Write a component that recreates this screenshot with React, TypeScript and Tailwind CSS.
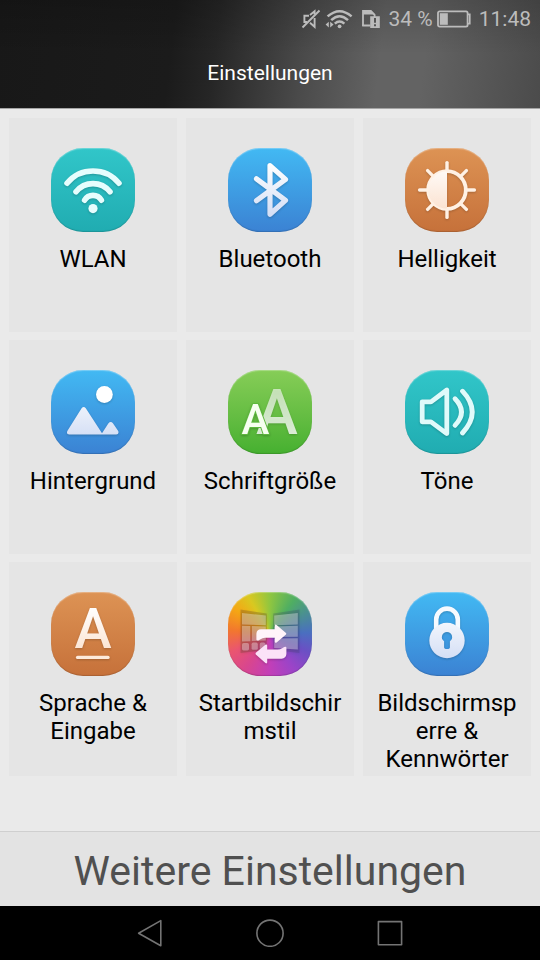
import type { ReactNode } from 'react'

type TileColor = 'teal' | 'blue' | 'orange' | 'green' | 'rainbow'

const TILE_BG: Record<TileColor, string> = {
  teal:    'bg-linear-to-b from-[#31c6c9] to-[#20acb1]',
  blue:    'bg-linear-to-b from-[#42b9f3] to-[#3b82d3]',
  orange:  'bg-linear-to-b from-[#dd9354] to-[#c6713a]',
  green:   'bg-linear-to-b from-[#86cd57] to-[#45b030]',
  rainbow: 'bg-[conic-gradient(from_0deg_at_50%_50%,#8fc640_0deg,#4fae62_35deg,#4a8f92_60deg,#4a6fc0_88deg,#6a50c4_115deg,#9a44c8_145deg,#c23fb8_180deg,#d8468f_215deg,#ea5570_245deg,#f2762f_275deg,#f5a614_305deg,#d9c820_330deg,#8fc640_360deg)]',
}

function Glyph({ children }: { children: ReactNode }) {
  return (
    <svg
      viewBox="0 0 84 84"
      aria-hidden="true"
      className="block size-full drop-shadow-[0_1px_1px_rgba(0,0,0,0.2)]"
      fill="none"
      strokeLinecap="round"
      strokeLinejoin="round"
    >
      <defs>
        <linearGradient id="snow" gradientUnits="userSpaceOnUse" x1="0" y1="16" x2="0" y2="68">
          <stop offset="0" stopColor="#ffffff" />
          <stop offset="1" stopColor="#d3def5" />
        </linearGradient>
        <linearGradient id="cream" gradientUnits="userSpaceOnUse" x1="0" y1="14" x2="0" y2="66">
          <stop offset="0" stopColor="#ffffff" />
          <stop offset="1" stopColor="#fbe0cc" />
        </linearGradient>
        <linearGradient id="leaf" gradientUnits="userSpaceOnUse" x1="0" y1="18" x2="0" y2="64">
          <stop offset="0" stopColor="#ffffff" stopOpacity="0.6" />
          <stop offset="1" stopColor="#ffffff" stopOpacity="0.8" />
        </linearGradient>
      </defs>
      {children}
    </svg>
  )
}

function WifiGlyph() {
  return (
    <Glyph>
      <g stroke="#e6fdfd" strokeWidth="5.6">
        <path d="M16 35.2A33.7 33.7 0 0 1 68 35.2" />
        <path d="M25 43.8A21.7 21.7 0 0 1 59 43.8" />
        <path d="M33.6 52.2A9.7 9.7 0 0 1 50.4 52.2" />
      </g>
      <circle cx="42" cy="60.6" r="4.6" fill="#e6fdfd" />
    </Glyph>
  )
}

function BluetoothGlyph() {
  return (
    <Glyph>
      <path d="M28.5 30.8 57.5 52.4 42 66.2V17.6L57.5 31.4 28.5 52.7" stroke="url(#snow)" strokeWidth="5.2" />
    </Glyph>
  )
}

const RAYS = [0, 45, 90, 135, 180, 225, 270, 315]

function BrightnessGlyph() {
  return (
    <Glyph>
      <circle cx="42" cy="42" r="18.8" stroke="#fff1e4" strokeWidth="3.8" />
      <path d="M42 23.2a18.8 18.8 0 0 0 0 37.6z" fill="url(#cream)" />
      {RAYS.map(a => (
        <path key={a} d="M42 22V14.6" stroke="#fff1e4" strokeWidth="3.4" transform={`rotate(${a} 42 42)`} />
      ))}
    </Glyph>
  )
}

function WallpaperGlyph() {
  return (
    <Glyph>
      <circle cx="53.4" cy="24.5" r="8.4" fill="#ffffff" />
      <path
        d="M30.6 38.2q2.1-2.6 4.2 0L51 63.2 57.3 53.4q2.4-2.6 4.8 0L67.2 61q1.2 3.3-2 3.5H18.2q-3.4-.4-1.7-3.7z"
        fill="url(#snow)"
      />
    </Glyph>
  )
}

function FontSizeGlyph() {
  return (
    <Glyph>
      <text x="49" y="63.5" textAnchor="middle" fontSize="63" fontWeight="500" fill="url(#leaf)">A</text>
      <text x="27.5" y="63.5" textAnchor="middle" fontSize="42" fontWeight="500" fill="#f6fff0" stroke="#5db83d" strokeWidth="2" paintOrder="stroke">A</text>
    </Glyph>
  )
}

function SoundGlyph() {
  return (
    <Glyph>
      <g stroke="#e0fafa" strokeWidth="4.8">
        <path d="M17.2 31.8H26L41.8 20V63.6L26 51.8H17.2z" />
        <path d="M50 28.8Q63 42 50 55.4" />
        <path d="M57.5 21.2Q77 42 57.5 63" />
      </g>
    </Glyph>
  )
}

function LanguageGlyph() {
  return (
    <Glyph>
      <text x="42" y="55.5" textAnchor="middle" fontSize="56" fontWeight="500" fill="url(#cream)">A</text>
      <path d="M26.6 65.4H57" stroke="#fdeadb" strokeWidth="3.4" />
    </Glyph>
  )
}

function HomeStyleGlyph() {
  return (
    <Glyph>
      <path d="M12.5 17.6 38.8 21.4V58L12.5 61z" fill="#5a3c28" fillOpacity="0.28" />
      <path d="M45.2 21.4 71.5 17.6V61L45.2 58z" fill="#3c3c64" fillOpacity="0.25" />
      <g fill="#ffffff" fillOpacity="0.34">
        <path d="M14 21 37.8 23.6V33.2L14 32.4z" />
        <path d="M14 33.8 22.3 34V49.2L14 49.6z" />
        <path d="M23.8 34 37.8 34.4V48.6L23.8 49z" />
        <rect x="14" y="51" width="7" height="7.4" rx="1.6" />
        <rect x="23.6" y="50.6" width="6.2" height="7.2" rx="1.6" />
        <rect x="31.8" y="50.4" width="5.6" height="6.8" rx="1.6" />
        <path d="M46.2 23.6 69.8 21V32.4L46.2 33.2z" />
        <path d="M46.2 34.6 69.8 33.8V44.8L46.2 45z" />
        <path d="M46.2 46.4 69.8 46.2V57.4L46.2 56z" />
      </g>
      <path d="M29.4 48.6q-1-.2-1-1V41.8Q28.6 37.4 33 37.3H46.8V33.4q.4-1.4 1.8-.4L58 41q.6.8 0 1.6L48.6 50.4q-1.6.8-1.8-.6V45.8H37Q34.6 45.8 32 47.4 30.4 48.6 29.4 48.6z" fill="#fff4fa" />
      <path d="M57.4 54.8q1 .2 1 1V62Q58 66.4 53.6 66.7H39.2V70.6q-.4 1.4-1.8.4L27.8 62.4q-.6-.8 0-1.6L37.4 52.8q1.6-.8 1.8.6V57.6H49.6Q52 57.6 54.6 56 56.4 54.8 57.4 54.8z" fill="#fbe2f8" />
    </Glyph>
  )
}

function LockGlyph() {
  return (
    <Glyph>
      <path d="M31.2 40V27.4a10.8 10.8 0 0 1 21.6 0V40" stroke="#f6faff" strokeWidth="4.6" />
      <path
        fillRule="evenodd"
        d="M42 30.8a17.7 17.7 0 1 1 0 35.4 17.7 17.7 0 0 1 0-35.4zM42 40a5.1 5.1 0 0 0-2.9 9.3V55.6q.2 1.4 1.6 1.4h2.6q1.4 0 1.6-1.4V49.3A5.1 5.1 0 0 0 42 40z"
        fill="url(#snow)"
      />
    </Glyph>
  )
}

const TILES: { label: string; color: TileColor; glyph: ReactNode }[] = [
  { label: 'WLAN',                      color: 'teal',    glyph: <WifiGlyph /> },
  { label: 'Bluetooth',                 color: 'blue',    glyph: <BluetoothGlyph /> },
  { label: 'Helligkeit',                color: 'orange',  glyph: <BrightnessGlyph /> },
  { label: 'Hintergrund',               color: 'blue',    glyph: <WallpaperGlyph /> },
  { label: 'Schriftgröße',              color: 'green',   glyph: <FontSizeGlyph /> },
  { label: 'Töne',                      color: 'teal',    glyph: <SoundGlyph /> },
  { label: 'Sprache & Eingabe',         color: 'orange',  glyph: <LanguageGlyph /> },
  { label: 'Startbildschirmstil',       color: 'rainbow', glyph: <HomeStyleGlyph /> },
  { label: 'Bildschirmsperre & Kennwörter', color: 'blue', glyph: <LockGlyph /> },
]

function StatusBar() {
  return (
    <div className="flex h-[38px] items-center justify-end pr-[9px] text-[21px] leading-none text-[#bcbcbc]">
      {/* Muted */}
      <svg viewBox="0 0 20 20" className="mr-1 size-5" fill="none" stroke="currentColor" strokeWidth="1.9" aria-hidden="true">
        <path d="M1.5 18.5 18.5 1.5" />
        <path d="M8 6.8H3.4V13H6M9 6 13.6 2.2V5.6M13.6 9V17.8L9 13.8" />
      </svg>
      {/* WLAN */}
      <svg viewBox="0 0 28 20" className="mr-2 h-5 w-7" fill="none" stroke="currentColor" strokeWidth="2.5" aria-hidden="true">
        <path d="M2.6 7.4Q14.5-3 26.6 7.4M6.2 11.2Q14.5 3.4 23 11.2M9.8 14.6Q14.5 10.4 19.4 14.6" />
        <circle cx="14.6" cy="17.3" r="1.9" fill="currentColor" stroke="none" />
        <path d="M0.6 15.6 3.8 12.8V18.4zM8.6 15.6 5.2 12.8V18.4z" fill="currentColor" stroke="none" />
      </svg>
      {/* SIM warning */}
      <svg viewBox="0 0 20 20" className="mr-2 size-5" aria-hidden="true">
        <path d="M2 17V1.8H9.6L13.6 5.8V8" fill="none" stroke="currentColor" strokeWidth="1.8" />
        <path d="M2 1H10L14.4 5.4H2zM1.2 15.6H9.4V17.4H1.2z" fill="currentColor" />
        <path fillRule="evenodd" d="M9.2 7.2H18.8V19H9.2zM13 9V13.8H15V9zM13 15.2V17.2H15V15.2z" fill="currentColor" />
      </svg>
      <span className="mr-1">34 %</span>
      <svg viewBox="0 0 34 18" className="mr-2 h-[18px] w-[34px]" aria-hidden="true">
        <rect x="1" y="1.4" width="29.6" height="15.2" rx="1.6" fill="none" stroke="currentColor" strokeWidth="1.8" />
        <path d="M31 4.4H32.8V13.6H31" fill="none" stroke="currentColor" strokeWidth="1.6" />
        <rect x="2.8" y="3.2" width="8" height="11.6" fill="currentColor" />
      </svg>
      <time>11:48</time>
    </div>
  )
}

function NavBar() {
  const btn = 'flex h-full w-[120px] items-center justify-center'
  return (
    <nav className="flex h-[54px] justify-center bg-black text-[#747474]">
      <button type="button" aria-label="Zurück" className={btn}>
        <svg viewBox="0 0 28 28" className="size-7" fill="none" stroke="currentColor" strokeWidth="1.6" strokeLinejoin="round">
          <path d="M24.8 1.6V26.8L2.6 14.2z" />
        </svg>
      </button>
      <button type="button" aria-label="Startseite" className={btn}>
        <svg viewBox="0 0 28 28" className="size-7" fill="none" stroke="currentColor" strokeWidth="1.6">
          <circle cx="14" cy="14.2" r="13.1" />
        </svg>
      </button>
      <button type="button" aria-label="Letzte Apps" className={btn}>
        <svg viewBox="0 0 28 28" className="size-7" fill="none" stroke="currentColor" strokeWidth="1.6" strokeLinejoin="round">
          <rect x="2.4" y="2.6" width="23.2" height="23.2" />
        </svg>
      </button>
    </nav>
  )
}

export default function App() {
  return (
    <div className="flex min-h-screen flex-col bg-[#eaeaea] font-[Roboto,sans-serif]">
      <header className="h-[109px] border-b border-[#a5a5a5] bg-[linear-gradient(to_bottom,rgba(0,0,0,0.16),transparent_50%),linear-gradient(97deg,#181818_0%,#1b1b1b_32%,#262626_40%,#4a4a4a_56%,#636363_70%,#636363_78%,#4b4b4b_100%)]">
        <StatusBar />
        <h1 className="mt-[21px] text-center text-[21px] leading-7 text-white">Einstellungen</h1>
      </header>

      <main className="flex-1 px-[9px] pt-[9px] pb-6">
        <div className="grid auto-rows-[214px] grid-cols-3 gap-x-[9px] gap-y-2">
          {TILES.map(t => (
            <button key={t.label} type="button" className="flex min-w-0 flex-col items-center bg-[#e5e5e5] px-[10px] pt-[30px]">
              <span className={`${TILE_BG[t.color]} size-[84px] shrink-0 rounded-[32px] shadow-[inset_0_1px_1px_rgba(255,255,255,0.3),inset_0_-1px_1px_rgba(0,0,0,0.15)]`}>
                {t.glyph}
              </span>
              <span className="mt-[13px] w-full text-center text-2xl leading-7 wrap-break-word text-black">{t.label}</span>
            </button>
          ))}
        </div>
      </main>

      <button type="button" className="h-[75px] border-t border-[#cfcfcf] bg-[#e3e3e3] pt-1 text-[41px] leading-none text-[#505050]">
        Weitere Einstellungen
      </button>
      <NavBar />
    </div>
  )
}
